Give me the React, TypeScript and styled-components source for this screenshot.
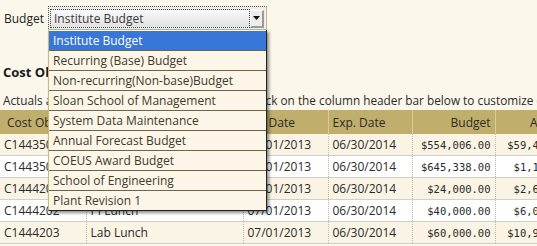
import React from "react";
import styled, { createGlobalStyle } from "styled-components";

const Global = createGlobalStyle`
  html, body { margin: 0; padding: 0; background: #fbf7eb; }
  body { font-family: "Open Sans", "Noto Sans", sans-serif; font-size: 12px; color: #2b2b2b; overflow: hidden; }
`;

const Page = styled.div`
  position: relative;
  width: 537px;
  height: 246px;
  overflow: hidden;
`;

const FormRow = styled.div`
  display: flex;
  align-items: center;
  gap: 4px;
  padding: 6px 0 0 4px;
  height: 25px;
`;

const Label = styled.span`
  font-size: 12px;
  color: #222;
`;

const SelectBox = styled.div`
  box-sizing: border-box;
  width: 219px;
  height: 25px;
  border-top: 1px dotted #5a5238;
  border-left: 1px dotted #5a5238;
  border-right: 1px solid #c8b97c;
  border-bottom: 2px solid #c8b97c;
  background: #efefef;
  padding: 2px 2px 1px 1px;
  display: flex;
  align-items: center;
`;

const SelectInner = styled.div`
  flex: 1;
  align-self: stretch;
  display: flex;
  align-items: center;
  background: linear-gradient(#f9f9f9, #e2e2e2);
  border: 1px dotted #444;
  padding: 0 3px 0 3px;
  font-size: 12px;
  color: #3a3a3a;
`;

const SelectText = styled.span`
  flex: 1;
`;

const ArrowButton = styled.div`
  width: 14px;
  height: 18px;
  box-sizing: border-box;
  background: #ececec;
  border-right: 2px solid #9a9a9a;
  border-bottom: 2px solid #9a9a9a;
  border-left: 1px solid #fff;
  border-top: 1px solid #fff;
  display: flex;
  align-items: center;
  justify-content: center;
`;

const Heading = styled.h2`
  margin: 0;
  padding: 32px 0 0 3px;
  font-size: 13px;
  font-weight: 700;
  line-height: 18px;
  color: #1a1a1a;
`;

const Note = styled.p`
  margin: 0;
  padding: 11px 0 0 3px;
  font-size: 11.8px;
  line-height: 16px;
  white-space: nowrap;
`;

const Table = styled.table`
  margin-top: 2px;
  border-collapse: collapse;
  table-layout: fixed;
  width: 575px;
`;

const Th = styled.th<{ $right?: boolean; $w: number; $first?: boolean }>`
  width: ${(p) => p.$w}px;
  background: #bfae6c;
  height: 24px;
  padding: 0 4px 0 ${(p) => (p.$first ? 7 : 4)}px;
  text-align: ${(p) => (p.$right ? "right" : "left")};
  font-weight: 400;
  font-size: 12px;
  color: #2e2a1e;
  border-right: 1px solid #d8cc9c;
  white-space: nowrap;
  overflow: hidden;
  box-sizing: border-box;
`;

const Tr = styled.tr<{ $alt: boolean }>`
  background: ${(p) => (p.$alt ? "#ffffff" : "#f9f4e4")};
  border-bottom: 1px solid #d2cfc6;
`;

const Td = styled.td<{ $right?: boolean; $mono?: boolean }>`
  height: 21px;
  padding: 0 4px 0 4px;
  text-align: ${(p) => (p.$right ? "right" : "left")};
  font-family: ${(p) => (p.$mono ? '"DejaVu Sans Mono", monospace' : "inherit")};
  font-size: ${(p) => (p.$mono ? "10.5px" : "12px")};
  border-right: 1px dotted #bdbab0;
  white-space: nowrap;
  overflow: hidden;
  color: #2b2b2b;
`;

const List = styled.ul`
  position: absolute;
  top: 30px;
  left: 48px;
  width: 219px;
  box-sizing: border-box;
  margin: 0;
  padding: 1px 0 0 0;
  list-style: none;
  background: #fbf6e8;
  border-left: 1px solid #c8b97c;
  border-right: 1px solid #222;
  border-bottom: 1px solid #222;
  box-shadow: 2px 2px 3px rgba(0, 0, 0, 0.45);
`;

const Item = styled.li<{ $selected?: boolean; $last?: boolean }>`
  height: 19px;
  line-height: 19px;
  padding-left: 4px;
  font-size: 12px;
  background: ${(p) => (p.$selected ? "#3876d8" : "transparent")};
  color: ${(p) => (p.$selected ? "#ffffff" : "#43392a")};
  border-bottom: ${(p) => (p.$last ? "none" : "1px solid #6f6446")};
  white-space: nowrap;
`;

const options = [
  "Institute Budget",
  "Recurring (Base) Budget",
  "Non-recurring(Non-base)Budget",
  "Sloan School of Management",
  "System Data Maintenance",
  "Annual Forecast Budget",
  "COEUS Award Budget",
  "School of Engineering",
  "Plant Revision 1",
];

const rows = [
  ["C1443501", "Research Supplies", "07/01/2013", "06/30/2014", "$554,006.00", "$59,415.00"],
  ["C1443502", "Research Travel", "07/01/2013", "06/30/2014", "$645,338.00", "$1,120.00"],
  ["C1444201", "Seminar Series", "07/01/2013", "06/30/2014", "$24,000.00", "$2,640.00"],
  ["C1444202", "PI Lunch", "07/01/2013", "06/30/2014", "$40,000.00", "$6,010.00"],
  ["C1444203", "Lab Lunch", "07/01/2013", "06/30/2014", "$60,000.00", "$10,920.00"],
];

const cols: { t: string; w: number; right?: boolean }[] = [
  { t: "Cost Object", w: 86 },
  { t: "Description", w: 157 },
  { t: "Eff. Date", w: 85 },
  { t: "Exp. Date", w: 84 },
  { t: "Budget", w: 83, right: true },
  { t: "Actuals", w: 80, right: true },
];

export default function App() {
  return (
    <Page>
      <Global />
      <FormRow>
        <Label>Budget</Label>
        <SelectBox>
          <SelectInner>
            <SelectText>Institute Budget</SelectText>
          </SelectInner>
          <ArrowButton>
            <svg width="7" height="4" viewBox="0 0 7 4">
              <path d="M0 0h7L3.5 4z" fill="#111" />
            </svg>
          </ArrowButton>
        </SelectBox>
      </FormRow>
      <Heading>Cost Objects</Heading>
      <Note>
        Actuals are as of 07/31/2013 final close. Right click on the column header bar below to customize columns.
      </Note>
      <Table>
        <thead>
          <tr>
            {cols.map((c, i) => (
              <Th key={c.t} $w={c.w} $right={c.right} $first={i === 0}>
                {c.t}
              </Th>
            ))}
          </tr>
        </thead>
        <tbody>
          {rows.map((r, i) => (
            <Tr key={r[0]} $alt={i % 2 === 1}>
              <Td>{r[0]}</Td>
              <Td>{r[1]}</Td>
              <Td>{r[2]}</Td>
              <Td>{r[3]}</Td>
              <Td $right $mono>
                {r[4]}
              </Td>
              <Td $right $mono>
                {r[5]}
              </Td>
            </Tr>
          ))}
        </tbody>
      </Table>
      <List>
        {options.map((o, i) => (
          <Item key={o} $selected={i === 0} $last={i === options.length - 1}>
            {o}
          </Item>
        ))}
      </List>
    </Page>
  );
}
